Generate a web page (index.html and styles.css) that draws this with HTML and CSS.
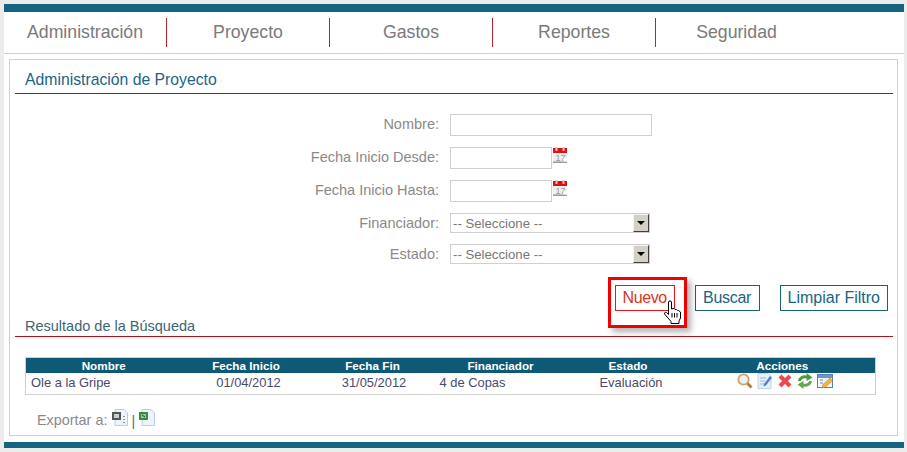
FILE: index.html
```html
<!DOCTYPE html>
<html lang="es">
<head>
<meta charset="utf-8">
<title>Administración de Proyecto</title>
<link rel="stylesheet" href="styles.css">
</head>
<body>
<div class="page">
  <div class="topbar"></div>
  <nav class="nav">
    <a class="nav-item">Administración</a>
    <a class="nav-item">Proyecto</a>
    <a class="nav-item">Gastos</a>
    <a class="nav-item">Reportes</a>
    <a class="nav-item nav-last">Seguridad</a>
  </nav>
  <main class="panel">
    <h1 class="title">Administración de Proyecto</h1>
    <form class="form">
      <div class="row"><label class="lbl">Nombre:</label><span class="input wide"></span></div>
      <div class="row"><label class="lbl">Fecha Inicio Desde:</label><span class="input date"></span>
        <svg class="cal" viewBox="0 0 14 16" width="14" height="16"><rect y="1" width="14" height="15" fill="#eee"/><rect y="1" width="14" height="5" fill="#e01010"/><rect x="2.500" width="2" height="4" fill="#ccc"/><rect x="9.500" width="2" height="4" fill="#ccc"/><rect y="14.500" width="14" height="1.500" fill="#999"/><text x="2.500" y="13.500" class="cal-num">17</text><rect x="10.500" y="11" width="3.500" height="3.500" fill="#fff"/></svg>
      </div>
      <div class="row"><label class="lbl">Fecha Inicio Hasta:</label><span class="input date"></span>
        <svg class="cal" viewBox="0 0 14 16" width="14" height="16"><rect y="1" width="14" height="15" fill="#eee"/><rect y="1" width="14" height="5" fill="#e01010"/><rect x="2.500" width="2" height="4" fill="#ccc"/><rect x="9.500" width="2" height="4" fill="#ccc"/><rect y="14.500" width="14" height="1.500" fill="#999"/><text x="2.500" y="13.500" class="cal-num">17</text><rect x="10.500" y="11" width="3.500" height="3.500" fill="#fff"/></svg>
      </div>
      <div class="row row-sel"><label class="lbl">Financiador:</label><span class="select"><span class="sel-text">-- Seleccione --</span><span class="sel-btn"><i class="arrow"></i></span></span></div>
      <div class="row row-sel"><label class="lbl">Estado:</label><span class="select"><span class="sel-text">-- Seleccione --</span><span class="sel-btn"><i class="arrow"></i></span></span></div>
    </form>
    <div class="actions">
      <span class="highlight"></span>
      <button type="button" class="btn btn-hot">Nuevo</button>
      <button type="button" class="btn btn-mid">Buscar</button>
      <button type="button" class="btn">Limpiar Filtro</button>
      <svg class="cursor" viewBox="0 0 17 24" width="17" height="24"><path d="M4.500 2C4.500.5 7.500.5 7.500 2V9L9 8.500h1l1 1h1.500l1 1h1l2 1.500V18L15 21v2.500H7v-2L4 18 .5 14C0 12.500 1.500 12 2.500 12.500l2 2z" fill="#fff" stroke="#000"/><path d="M8 13v4.500M10.500 13v4.500M13 13v4.500" stroke="#000" fill="none"/></svg>
    </div>
    <h2 class="subtitle">Resultado de la Búsqueda</h2>
    <table class="grid">
      <colgroup><col class="c1"><col class="c2"><col class="c3"><col class="c4"><col class="c5"><col class="c6"></colgroup>
      <thead><tr><th>Nombre</th><th>Fecha Inicio</th><th>Fecha Fin</th><th>Financiador</th><th>Estado</th><th>Acciones</th></tr></thead>
      <tbody><tr>
        <td class="left">Ole a la Gripe</td><td class="d1">01/04/2012</td><td class="d2">31/05/2012</td><td class="d3">4 de Copas</td><td class="d4">Evaluación</td>
        <td class="icons"><div class="icon-row">
          <svg viewBox="0 0 16 16" width="16" height="16"><circle cx="6.500" cy="6.500" r="5.200" fill="#eef2f4" stroke="#d2a26a" stroke-width="1.800"/><path d="M10.500 10.500l4 4" stroke="#b27a3c" stroke-width="2.800"/></svg>
          <svg viewBox="0 0 16 16" width="16" height="16"><path d="M1 .5h10l3 3v12H1z" fill="#e6f0fb" stroke="#bcd3ea"/><path d="M3 5h6M3 8h5M3 11h6" stroke="#a8b8c8"/><path d="M7 11l6-8 2 1.500-6 8-2.500 1z" fill="#4a86d0"/></svg>
          <svg viewBox="0 0 16 16" width="16" height="16"><path d="M3 3l10 10M13 3L3 13" stroke="#ea4a50" stroke-width="4.200"/></svg>
          <svg viewBox="0 0 16 16" width="16" height="16"><path d="M2.300 8C3 4.500 6.500 3 10 4.200" fill="none" stroke="#4f9a3e" stroke-width="3"/><path d="M9.500 0L15.500 4.500 9.500 8z" fill="#4f9a3e"/><path d="M13.700 8C13 11.500 9.500 13 6 11.800" fill="none" stroke="#63a850" stroke-width="3"/><path d="M6.500 16L.5 11.500 6.500 8z" fill="#63a850"/></svg>
          <svg viewBox="0 0 16 16" width="16" height="16"><rect x=".5" y="1.500" width="15" height="13" fill="#f0f5fb" stroke="#5a7fb4"/><rect x="1" y="2" width="14" height="3" fill="#6f96cc"/><path d="M3 7h3M3 10h3" stroke="#6a8ab8"/><path d="M5 15l1-3.500 7-6.500 2.500 2.500-7 6.500z" fill="#f0b840" stroke="#b88420" stroke-width=".6"/></svg>
        </div></td>
      </tr></tbody>
    </table>
    <div class="export">
      <span class="export-lbl">Exportar a:</span>
      <svg class="doc" viewBox="0 0 16 17" width="16" height="17"><path d="M3 .5h9l3.500 3.500v12.500H3z" fill="#edf3fb" stroke="#b8cfe8"/><rect y="3" width="9" height="8" fill="#555"/><rect x="2" y="5" width="5" height="4" fill="#ccc"/><path d="M12 7v1M12 10v1M12 13v1" stroke="#333"/></svg>
      <span class="sep">|</span>
      <svg class="doc" viewBox="0 0 16 17" width="16" height="17"><path d="M3 .5h9l3.500 3.500v12.500H3z" fill="#edf3fb" stroke="#b8cfe8"/><rect y="3" width="9" height="8" fill="#3f8a3f"/><rect x="2" y="5" width="5" height="4" fill="#8fc78f"/><path d="M3 6l3 2" stroke="#1a4a1a"/></svg>
    </div>
  </main>
  <div class="footbar"></div>
</div>
</body>
</html>
```
FILE: styles.css
```css
* { box-sizing: border-box; }
html, body { margin: 0; height: 100%; }
body {
  width: 907px;
  height: 452px;
  overflow: hidden;
  background: #ececec;
  font-family: "Liberation Sans", Arial, sans-serif;
  padding: 4px 3px 0 4px;
}
.page {
  background: #fff;
  width: 900px;
  height: 443px;
  display: flex;
  flex-direction: column;
}
.topbar { height: 8px; background: #126480; flex: none; }
.nav {
  height: 42px;
  flex: none;
  display: flex;
  align-items: center;
  border-bottom: 1px solid #cfcfcf;
  padding-bottom: 1px;
}
.nav-item {
  width: 163px;
  height: 29px;
  margin-top: 1px;
  display: flex;
  align-items: center;
  justify-content: center;
  border-right: 1px solid #b5242a;
  color: #7a7a7a;
  font-size: 17.7px;
}
.nav-last { border-right: 0; width: 161px; }
.panel {
  margin: 5px 6px 0 5px;
  height: 377px;
  border: 1px solid #cfcfcf;
  padding: 0 4px 0 5px;
  flex: none;
}
.title {
  margin: 0;
  height: 34px;
  border-bottom: 1px solid #b01018;
  padding: 10px 0 0 10px;
  font-weight: normal;
  font-size: 15.75px;
  line-height: 20px;
  color: #1a6484;
}
.form { padding-top: 20px; }
.row {
  display: flex;
  align-items: flex-start;
  height: 33px;
}
.row-sel { height: 31px; }
.lbl {
  width: 424px;
  text-align: right;
  color: #8a8a8a;
  font-size: 14.5px;
  line-height: 20px;
  margin-right: 11px;
}
.input {
  display: block;
  height: 22px;
  border: 1px solid #cfcfcf;
  background: #fff;
}
.wide { width: 202px; }
.date { width: 102px; }
.cal { margin-left: 1px; flex: none; }
.cal-num { font-size: 9px; fill: #999; font-family: "Liberation Sans", Arial, sans-serif; }
.select {
  display: flex;
  width: 200px;
  height: 20px;
  border: 1px solid #cfcfcf;
  background: #fff;
}
.sel-text {
  flex: 1;
  font-size: 13.2px;
  line-height: 19px;
  padding-left: 2px;
  color: #777;
}
.sel-btn {
  width: 16px;
  height: 18px;
  background: #d4d0c8;
  border-style: solid;
  border-width: 1px;
  border-color: #f4f4f0 #404040 #404040 #f4f4f0;
  display: flex;
  align-items: center;
  justify-content: center;
}
.arrow {
  width: 0;
  height: 0;
  border-left: 4px solid transparent;
  border-right: 4px solid transparent;
  border-top: 4px solid #000;
}
.actions {
  position: relative;
  display: flex;
  justify-content: flex-end;
  gap: 20px;
  height: 37px;
  padding: 10px 5px 0 0;
  align-items: flex-start;
}
.btn {
  height: 26px;
  padding: 0 7px;
  background: #fff;
  border: 1px solid #126480;
  color: #1a6484;
  font: 16px/24px "Liberation Sans", Arial, sans-serif;
}
.btn-mid { width: 65px; letter-spacing: -.3px; padding: 0; }
.btn-hot {
  border-color: #e8141c;
  color: #d9341c;
  width: 60px;
  letter-spacing: -.4px;
}
.highlight {
  position: absolute;
  left: 593px;
  top: 2px;
  width: 79px;
  height: 51px;
  border: 3px solid #f00000;
  box-shadow: 4px 4px 6px rgba(0,0,0,.3);
}
.cursor {
  position: absolute;
  left: 649px;
  top: 25px;
  z-index: 2;
}
.subtitle {
  margin: 0;
  height: 25px;
  border-bottom: 1px solid #b01018;
  padding: 5px 0 0 10px;
  font-weight: normal;
  font-size: 14.5px;
  line-height: 18px;
  color: #3f6474;
}
.grid {
  margin: 20px 0 0 10px;
  width: 850px;
  height: 37px;
  border-collapse: collapse;
  table-layout: fixed;
  border: 1px solid #cfcfcf;
}
.c1 { width: 156px; } .c2 { width: 129px; } .c3 { width: 124px; } .c4 { width: 132px; } .c5 { width: 123px; } .c6 { width: 186px; }
.grid th {
  background: #0e5a76;
  color: #fff;
  font-size: 11.7px;
  height: 15px;
  padding: 0;
  line-height: 15px;
  font-weight: bold;
}
.grid td {
  color: #4a4a6a;
  font-size: 12.9px;
  text-align: center;
  padding: 0;
  height: 21px;
  line-height: 20px;
}
.grid td.left { text-align: left; padding-left: 5px; }
.grid td.d1 { padding-left: 5px; }
.grid td.d2 { padding-left: 3px; }
.grid td.d3 { text-align: left; padding-left: 5px; }
.grid td.d4 { padding-left: 6px; }
.grid td.icons { padding: 0 0 4px 47px; }
.icon-row { display: flex; gap: 4px; }
.icon-row svg { flex: none; }
.export {
  display: flex;
  align-items: flex-start;
  padding: 15px 0 0 22px;
  color: #8a8a8a;
  font-size: 14.4px;
}
.export-lbl { line-height: 20px; margin-right: 5px; }
.sep { line-height: 20px; color: #5a6a7a; margin: 1px 4px 0 3px; }
.doc { flex: none; margin-top: -1px; }
.footbar { margin-top: 6px; height: 6px; background: #126480; flex: none; }
```
